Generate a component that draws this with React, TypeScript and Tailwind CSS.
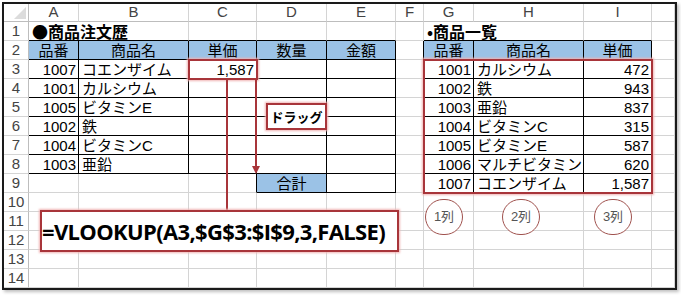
import React from 'react';

type Cell = { text: string; align?: 'left' | 'right' | 'center'; bold?: boolean; blue?: boolean; span?: number };

const LETTERS = ['A', 'B', 'C', 'D', 'E', 'F', 'G', 'H', 'I', ''];

const cells: Record<string, Cell> = {
  '1,1': { text: '●商品注文歴', bold: true, span: 2 },
  '7,1': { text: '•商品一覧', bold: true, span: 2 },
  '1,2': { text: '品番', align: 'center', blue: true },
  '2,2': { text: '商品名', align: 'center', blue: true },
  '3,2': { text: '単価', align: 'center', blue: true },
  '4,2': { text: '数量', align: 'center', blue: true },
  '5,2': { text: '金額', align: 'center', blue: true },
  '7,2': { text: '品番', align: 'center', blue: true },
  '8,2': { text: '商品名', align: 'center', blue: true },
  '9,2': { text: '単価', align: 'center', blue: true },
  '4,9': { text: '合計', align: 'center', blue: true },
  '3,3': { text: '1,587', align: 'right' },
};

const orders = [
  ['1007', 'コエンザイム'],
  ['1001', 'カルシウム'],
  ['1005', 'ビタミンE'],
  ['1002', '鉄'],
  ['1004', 'ビタミンC'],
  ['1003', '亜鉛'],
];
orders.forEach(([no, name], i) => {
  cells[`1,${i + 3}`] = { text: no, align: 'right' };
  cells[`2,${i + 3}`] = { text: name };
});

const products = [
  ['1001', 'カルシウム', '472'],
  ['1002', '鉄', '943'],
  ['1003', '亜鉛', '837'],
  ['1004', 'ビタミンC', '315'],
  ['1005', 'ビタミンE', '587'],
  ['1006', 'マルチビタミン', '620'],
  ['1007', 'コエンザイム', '1,587'],
];
products.forEach(([no, name, price], i) => {
  cells[`7,${i + 3}`] = { text: no, align: 'right' };
  cells[`8,${i + 3}`] = { text: name };
  cells[`9,${i + 3}`] = { text: price, align: 'right' };
});

// black ruled ranges: A2:E8, D9:E9, G2:I9
const inTable = (c: number, r: number) =>
  (c >= 1 && c <= 5 && r >= 2 && r <= 8) ||
  ((c === 4 || c === 5) && r === 9) ||
  (c >= 7 && c <= 9 && r >= 2 && r <= 9);

const skip = (c: number, r: number) => r === 1 && (c === 2 || c === 8);

function SheetCell({ c, r }: { c: number; r: number }) {
  const cell = cells[`${c},${r}`];
  const span = cell?.span ?? 1;
  const lastC = c + span - 1;
  const rightBlack = inTable(lastC, r) || inTable(lastC + 1, r);
  const bottomBlack = inTable(c, r) || inTable(c, r + 1);
  const align =
    cell?.align === 'right' ? 'justify-end pr-[2px]' : cell?.align === 'center' ? 'justify-center' : 'justify-start pl-[3px]';
  return (
    <div
      className={`flex items-center whitespace-nowrap border-r border-b text-[15px] leading-none text-black ${
        rightBlack ? 'border-r-black' : 'border-r-[#d4d4d4]'
      } ${bottomBlack ? 'border-b-black' : 'border-b-[#d4d4d4]'} ${cell?.blue ? 'bg-[#9bc2e6]' : ''} ${
        span === 2 ? 'col-span-2' : ''
      } ${align} ${cell?.bold ? "font-['Noto_Sans_CJK_JP',sans-serif] text-[16px] font-bold" : ''}`}
    >
      {cell?.text}
    </div>
  );
}

const red = 'border-[#a8353a] shadow-[0_0_2px_1px_#f0b4b4]';

export default function App() {
  const rows = Array.from({ length: 14 }, (_, i) => i + 1);
  return (
    <div className="h-[296px] w-[681px] bg-white pl-[2px] pt-[2px] font-['Liberation_Sans','Noto_Sans_CJK_JP',sans-serif]">
      <div className="inline-block border-2 border-[#1a1a1a] shadow-[2px_2px_3px_rgba(0,0,0,0.25)]">
        <div className="relative grid grid-cols-[25px_50px_110px_68px_70px_69px_28px_50px_110px_68px_23px] grid-rows-[18px_repeat(14,19px)]">
          {/* corner */}
          <div className="relative border-r border-b border-[#bdbdbd]">
            <svg className="absolute right-[2px] bottom-[2px]" width="12" height="12" viewBox="0 0 12 12">
              <polygon points="12,0 12,12 0,12" fill="#dcdcdc" />
            </svg>
          </div>
          {LETTERS.map((l, i) => (
            <div
              key={`h${i}`}
              className="flex items-center justify-center border-r border-b border-r-[#d4d4d4] border-b-[#bdbdbd] text-[15px] text-[#444]"
            >
              {l}
            </div>
          ))}
          {rows.map((r) => (
            <React.Fragment key={r}>
              <div className="flex items-center justify-center border-r border-b border-r-[#bdbdbd] border-b-[#d4d4d4] text-[15px] text-[#444]">
                {r}
              </div>
              {LETTERS.map((_, i) =>
                skip(i + 1, r) ? null : <SheetCell key={`${i}-${r}`} c={i + 1} r={r} />
              )}
            </React.Fragment>
          ))}

          {/* C3 selection */}
          <div className={`absolute left-[184px] top-[55px] h-[21px] w-[70px] border-2 ${red}`} />
          {/* lines */}
          <div className="absolute left-[222px] top-[76px] h-[130px] w-[2px] bg-[#a8353a]" />
          <svg className="absolute left-[246px] top-[76px]" width="12" height="94" viewBox="0 0 12 94">
            <rect x="5" y="0" width="2" height="88" fill="#a8353a" />
            <polygon points="2,86 10,86 6,94" fill="#a8353a" />
          </svg>
          {/* drag label */}
          <div
            className={`absolute left-[262px] top-[99px] flex h-[27px] w-[61px] items-center justify-center border-2 bg-white font-['Noto_Sans_CJK_JP',sans-serif] text-[13px] font-bold text-black ${red}`}
          >
            ドラッグ
          </div>
          {/* product list box */}
          <div className={`absolute left-[419px] top-[55px] h-[135px] w-[230px] border-2 ${red}`} />
          {/* formula */}
          <div
            className={`absolute left-[36px] top-[206px] flex h-[42px] w-[359px] items-center border-2 bg-white font-['Open_Sans',sans-serif] text-[22px] font-bold tracking-[-0.65px] text-black ${red}`}
          >
            =VLOOKUP(A3,$G$3:$I$9,3,FALSE)
          </div>
          {/* column circles */}
          <div className="absolute left-[421px] top-[195px] flex gap-[39px]">
            {['1列', '2列', '3列'].map((t, i) => (
              <div
                key={t}
                className={`flex h-[36px] w-[38px] items-center justify-center rounded-full border border-[#a0524e] bg-white text-[13px] text-[#555] ${
                  i === 2 ? 'ml-[15px]' : ''
                }`}
              >
                {t}
              </div>
            ))}
          </div>
        </div>
      </div>
    </div>
  );
}
